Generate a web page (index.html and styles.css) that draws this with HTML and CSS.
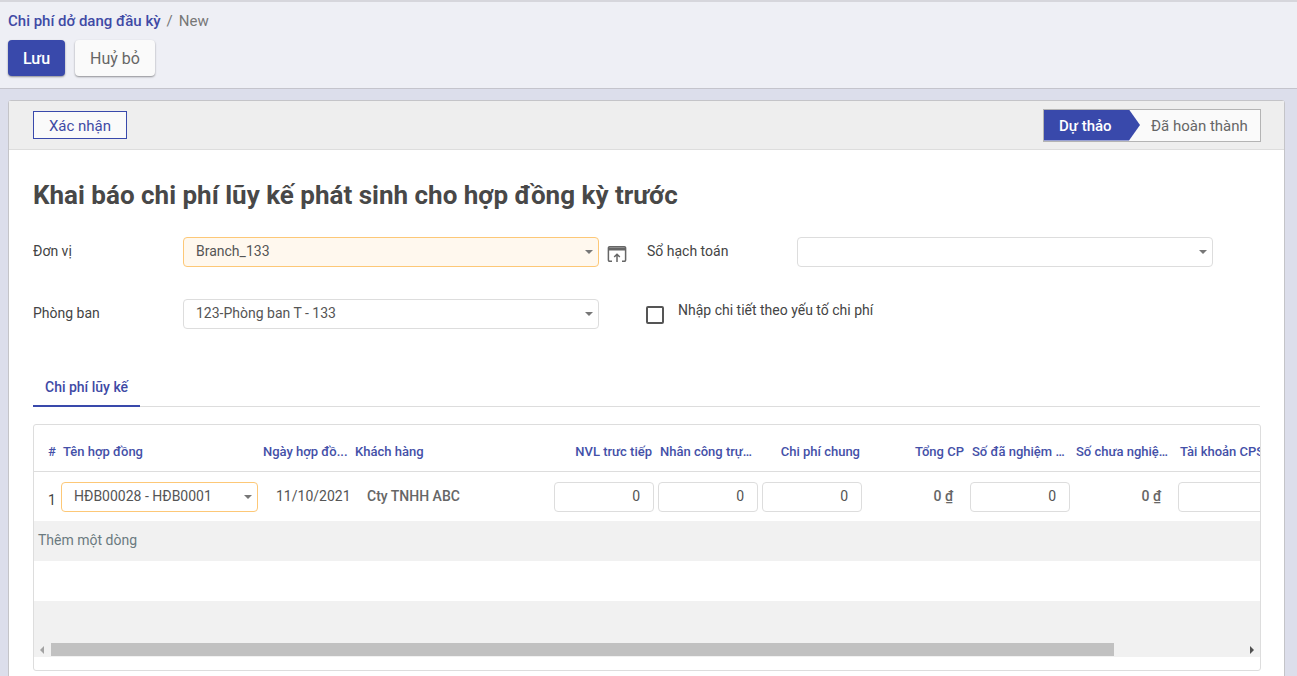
FILE: index.html
```html
<!DOCTYPE html>
<html lang="vi">
<head>
    <meta charset="UTF-8">
    <title>Chi phí dở dang đầu kỳ</title>
    <link rel="stylesheet" href="styles.css">
</head>
<body>
    <header class="control-panel">
        <div class="breadcrumb"><a class="crumb-link">Chi phí dở dang đầu kỳ</a><span class="crumb-sep">/</span><span class="crumb-current">New</span></div>
        <div class="actions">
            <button class="btn btn-primary" type="button">Lưu</button>
            <button class="btn btn-light" type="button">Huỷ bỏ</button>
        </div>
    </header>

    <main class="sheet">
        <div class="status-bar">
            <button class="btn-confirm" type="button">Xác nhận</button>
            <div class="stages">
                <span class="stage stage-active">Dự thảo</span>
                <span class="stage">Đã hoàn thành</span>
            </div>
        </div>

        <div class="sheet-body">
            <h1 class="title">Khai báo chi phí lũy kế phát sinh cho hợp đồng kỳ trước</h1>

            <div class="form-grid">
                <label class="field-label">Đơn vị</label>
                <div class="select select-required">Branch_133</div>
                <svg class="open-icon" width="20" height="18" viewBox="0 0 20 18" fill="none" stroke="#666" stroke-width="1.500">
                    <path d="M5 16.200H2.600A1.200 1.200 0 0 1 1.400 15V3A1.200 1.200 0 0 1 2.600 1.800H17.400A1.200 1.200 0 0 1 18.600 3V15A1.200 1.200 0 0 1 17.400 16.200H15"/>
                    <path d="M1.400 4H18.600" stroke-width="3"/>
                    <path d="M10 17V9.500M7.200 12l2.800-2.800 2.800 2.800"/>
                </svg>
                <label class="field-label">Sổ hạch toán</label>
                <div class="select"></div>

                <label class="field-label">Phòng ban</label>
                <div class="select">123-Phòng ban T - 133</div>
                <span></span>
                <div class="check-field">
                    <span class="checkbox"></span>
                    <span class="check-label">Nhập chi tiết theo yếu tố chi phí</span>
                </div>
            </div>

            <div class="tabs"><span class="tab">Chi phí lũy kế</span></div>

            <div class="table-box">
                <div class="table-clip">
                    <table class="lines">
                        <colgroup>
                            <col class="c-num"><col class="c-name"><col class="c-date"><col class="c-cust">
                            <col class="c-money"><col class="c-money"><col class="c-money"><col class="c-money">
                            <col class="c-money"><col class="c-money"><col class="c-acc">
                        </colgroup>
                        <thead>
                            <tr>
                                <th class="th-num">#</th>
                                <th class="th-name">Tên hợp đồng</th>
                                <th class="th-date">Ngày hợp đồ...</th>
                                <th class="th-cust">Khách hàng</th>
                                <th class="right">NVL trưc tiếp</th>
                                <th>Nhân công trự…</th>
                                <th class="right">Chi phí chung</th>
                                <th class="right">Tổng CP</th>
                                <th>Số đã nghiệm …</th>
                                <th>Số chưa nghiệ…</th>
                                <th>Tài khoản CPS</th>
                            </tr>
                        </thead>
                        <tbody>
                            <tr>
                                <td class="td-num">1</td>
                                <td class="td-name"><div class="select select-required select-small">HĐB00028 - HĐB0001</div></td>
                                <td class="td-date">11/10/2021</td>
                                <td class="td-cust">Cty TNHH ABC</td>
                                <td class="td-input"><div class="num-input">0</div></td>
                                <td class="td-input"><div class="num-input">0</div></td>
                                <td class="td-input"><div class="num-input">0</div></td>
                                <td class="td-amount">0 <u>₫</u></td>
                                <td class="td-input"><div class="num-input">0</div></td>
                                <td class="td-amount">0 <u>₫</u></td>
                                <td class="td-input"><div class="num-input"></div></td>
                            </tr>
                        </tbody>
                    </table>
                </div>
                <div class="add-line">Thêm một dòng</div>
                <div class="blank-line"></div>
                <div class="scroll-area">
                    <div class="scrollbar">
                        <span class="scroll-arrow scroll-left"></span>
                        <div class="scroll-track"><div class="scroll-thumb"></div></div>
                        <span class="scroll-arrow scroll-right"></span>
                    </div>
                </div>
            </div>
        </div>
    </main>
</body>
</html>
```

FILE: styles.css
```css
* {
    box-sizing: border-box;
}
html, body {
    height: 100%;
    overflow: hidden;
}
body {
    margin: 0;
    font-family: Roboto, "Noto Sans", sans-serif;
    font-size: 14px;
    color: #555;
    background-color: #dcdeeb;
}

/* top panel */
.control-panel {
    height: 89px;
    padding: 11px 8px 0;
    background-color: #eeeff5;
    border-top: 2px solid #d6d6dc;
    border-bottom: 1px solid #c4c4cc;
}
.breadcrumb {
    height: 16px;
    line-height: 16px;
    font-size: 15px;
}
.crumb-link {
    color: #3f4aa5;
    font-weight: 500;
}
.crumb-sep {
    margin: 0 6px;
    color: #777;
}
.crumb-current {
    color: #777;
}
.actions {
    display: flex;
    gap: 10px;
    margin-top: 11px;
}
.btn {
    height: 36px;
    border: 0;
    border-radius: 4px;
    font-family: inherit;
    font-size: 16px;
}
.btn-primary {
    width: 57px;
    color: #fff;
    font-weight: 500;
    background-color: #3949ab;
    box-shadow: 0 1px 2px rgba(0, 0, 0, .4);
}
.btn-light {
    width: 80px;
    color: #666;
    background-color: #fafafa;
    box-shadow: 0 1px 2px rgba(0, 0, 0, .4);
}

/* sheet */
.sheet {
    margin: 11px 12px 0 8px;
    height: 600px;
    background-color: #fff;
    border: 1px solid #c4c4c8;
    border-radius: 3px 3px 0 0;
}
.status-bar {
    display: flex;
    justify-content: space-between;
    align-items: center;
    height: 49px;
    padding: 0 23px 0 24px;
    background-color: #eee;
    border-bottom: 1px solid #ddd;
}
.btn-confirm {
    width: 94px;
    height: 28px;
    padding: 2px 0 0;
    font-family: inherit;
    font-size: 15px;
    color: #3f4aa5;
    background-color: #fafafa;
    border: 1px solid #3949ab;
}
.stages {
    display: flex;
    width: 218px;
    height: 33px;
    background-color: #fafafa;
    border: 1px solid #b4b4b4;
}
.stage {
    line-height: 32px;
    font-size: 15px;
    color: #666;
    padding-left: 11px;
    white-space: nowrap;
}
.stage-active {
    width: 96px;
    padding-left: 15px;
    color: #fff;
    font-weight: 500;
    background-color: #3949ab;
    clip-path: polygon(0 0, 85px 0, 100% 50%, 85px 100%, 0 100%);
}
.sheet-body {
    padding: 0 24px;
}
.title {
    margin: 29px 0 0;
    height: 32px;
    line-height: 32px;
    font-size: 26px;
    font-weight: 700;
    color: #484848;
}

/* form */
.form-grid {
    display: grid;
    grid-template-columns: 150px 416px 48px 150px 416px;
    grid-auto-rows: 30px;
    row-gap: 32px;
    align-items: center;
    margin-top: 26px;
}
.field-label {
    color: #444;
    line-height: 26px;
    padding-bottom: 2px;
}
.select {
    position: relative;
    height: 30px;
    line-height: 26px;
    padding-left: 12px;
    color: #555;
    background-color: #fff;
    border: 1px solid #ddd;
    border-radius: 4px;
}
.select::after {
    content: "";
    position: absolute;
    right: 5px;
    top: 12px;
    border-top: 4px solid #777;
    border-left: 4px solid transparent;
    border-right: 4px solid transparent;
}
.select-required {
    background-color: #fff8ee;
    border-color: #fdc877;
}
.open-icon {
    margin: 4px 0 0 8px;
}
.check-field {
    grid-column: 4 / 6;
    align-self: start;
    display: flex;
    align-items: flex-start;
    margin-left: -1px;
}
.checkbox {
    width: 18px;
    height: 18px;
    margin-top: 7px;
    border: 2px solid #555;
    border-radius: 2px;
}
.check-label {
    margin-left: 14px;
    line-height: 22px;
    color: #444;
}

/* tabs */
.tabs {
    height: 40px;
    margin-top: 38px;
    border-bottom: 1px solid #ddd;
}
.tab {
    display: inline-block;
    height: 40px;
    padding: 0 12px;
    line-height: 40px;
    color: #3f4aa5;
    font-weight: 500;
    border-bottom: 2px solid #3949ab;
}

/* table */
.table-box {
    margin-top: 17px;
    width: 1228px;
    height: 247px;
    border: 1px solid #ddd;
    border-radius: 3px;
}
.table-clip {
    overflow: hidden;
}
.lines {
    table-layout: fixed;
    border-collapse: collapse;
    width: 1386px;
}
.c-num { width: 26px; }
.c-name { width: 200px; }
.c-date { width: 92px; }
.c-cust { width: 200px; }
.c-money { width: 104px; }
.c-acc { width: 244px; }
.lines th {
    height: 46px;
    padding: 7px 4px 0;
    font-size: 13px;
    font-weight: 500;
    color: #4450a8;
    text-align: left;
    white-space: nowrap;
    overflow: hidden;
    border-bottom: 1px solid #ddd;
}
.lines th.right {
    text-align: right;
}
.lines th.th-num {
    padding-left: 14px;
}
.lines th.th-name {
    padding-left: 3px;
}
.lines th.th-date {
    padding-left: 3px;
}
.lines th.th-cust {
    padding-left: 3px;
}
.lines td {
    height: 50px;
    padding: 0 2px;
    font-size: 14px;
    color: #555;
    white-space: nowrap;
}
.lines td.td-num {
    padding: 8px 0 0 14px;
    color: #444;
}
.lines td.td-name {
    padding: 2px 2px 0 1px;
}
.lines td.td-input {
    padding-top: 2px;
}
.lines td.td-date {
    padding-left: 16px;
}
.lines td.td-cust {
    padding-left: 15px;
    font-weight: 500;
    color: #666;
}
.lines td.td-amount {
    padding-right: 15px;
    text-align: right;
    font-weight: 500;
    color: #666;
}
.select-small {
    width: 197px;
    background-color: #fff;
}
.num-input {
    width: 100px;
    height: 30px;
    line-height: 27px;
    padding-right: 13px;
    text-align: right;
    background-color: #fff;
    border: 1px solid #ddd;
    border-radius: 4px;
}
.add-line {
    height: 40px;
    line-height: 38px;
    padding-left: 4px;
    color: #6b7a80;
    background-color: #f1f1f1;
}
.blank-line {
    height: 40px;
    background-color: #fff;
}
.scroll-area {
    height: 56px;
    padding-top: 42px;
    background-color: #f1f1f1;
}
.scrollbar {
    display: flex;
    align-items: center;
    height: 13px;
}
.scroll-track {
    flex: 1;
    height: 13px;
}
.scroll-thumb {
    width: 1063px;
    height: 13px;
    background-color: #c1c1c1;
}
.scroll-arrow {
    width: 17px;
    height: 13px;
    position: relative;
}
.scroll-arrow::before {
    content: "";
    position: absolute;
    top: 3px;
    border-top: 4px solid transparent;
    border-bottom: 4px solid transparent;
}
.scroll-left::before {
    left: 6px;
    border-right: 4px solid #a3a3a3;
}
.scroll-right::before {
    right: 6px;
    border-left: 4px solid #505050;
}
```
